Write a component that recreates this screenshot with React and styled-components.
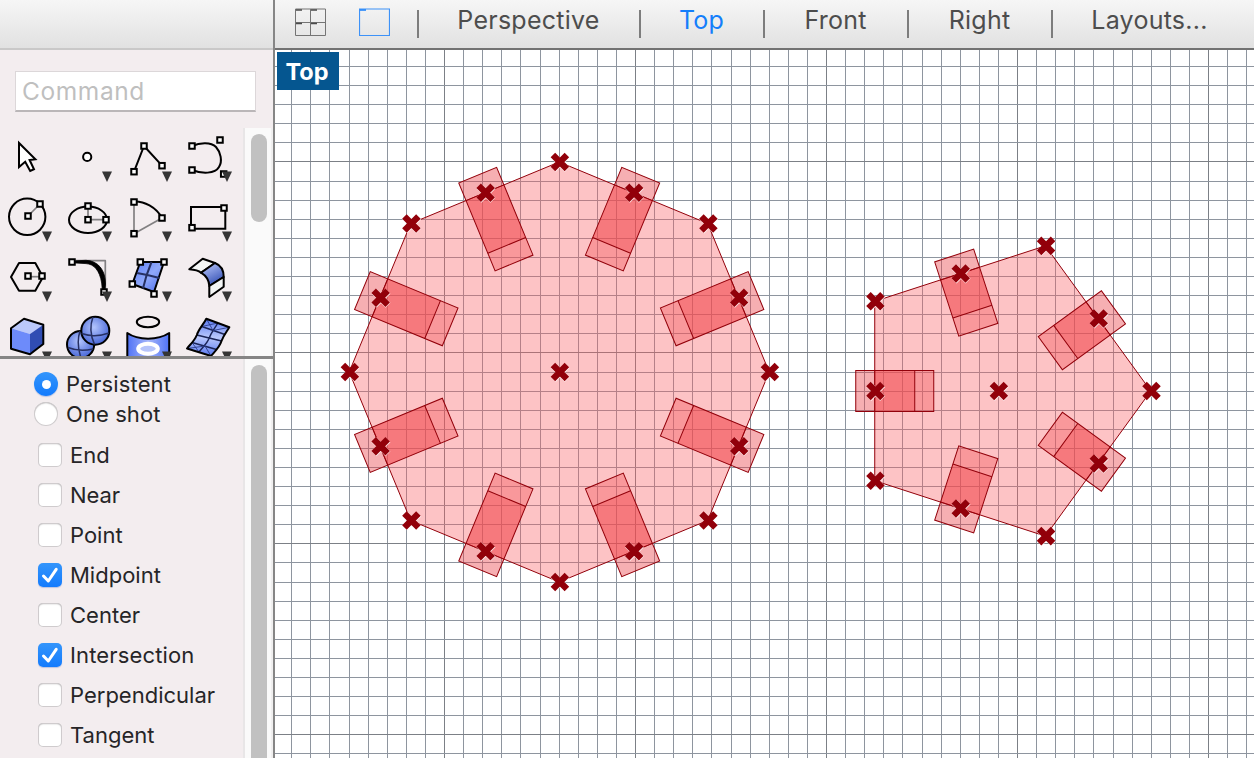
import React from "react";
import styled, { createGlobalStyle } from "styled-components";

const GlobalStyle = createGlobalStyle`
  * { box-sizing: border-box; }
  body { margin: 0; overflow: hidden; background: #fff; font-family: Inter, "Liberation Sans", sans-serif; }
`;

const Window = styled.div`
  display: flex;
  width: 1254px;
  height: 758px;
  overflow: hidden;
`;

const Sidebar = styled.aside`
  display: flex;
  flex-direction: column;
  flex: none;
  width: 275px;
  border-right: 2px solid #868686;
  background: #f3edef;
`;

const Header = styled.div`
  flex: none;
  height: 50px;
  border-bottom: 2px solid ${(p) => p.$line};
  background: linear-gradient(#f6f6f6, #e1e1e1);
`;

const CommandArea = styled.div`
  flex: none;
  height: 78px;
  padding: 21px 17px 0 15px;
`;

const CommandInput = styled.input`
  display: block;
  width: 241px;
  height: 41px;
  padding: 0 0 1px 6px;
  border: 1px solid #dcd7d9;
  border-bottom: 2px solid #bab6b8;
  border-radius: 0;
  outline: none;
  background: #fff;
  font: 400 24.5px Inter, sans-serif;
  letter-spacing: 0.6px;
  &::placeholder { color: #bfbfbf; opacity: 1; }
`;

const ScrollPane = styled.div`
  display: flex;
  overflow: hidden;
  height: ${(p) => p.$height}px;
  flex: none;
`;

const PaneBody = styled.div`
  flex: none;
  width: 243px;
`;

const ScrollTrack = styled.div`
  flex: none;
  width: 30px;
  padding: 6px 6px 0 6px;
  border-left: 2px solid #e8e6e7;
  border-right: 2px solid #f0efef;
  background: #fafafa;
`;

const ScrollThumb = styled.div`
  width: 16px;
  height: ${(p) => p.$height}px;
  border-radius: 8px;
  background: #c1c1c1;
`;

const ToolGrid = styled.div`
  display: grid;
  grid-template-columns: repeat(4, 60px);
  grid-auto-rows: 60px;
  padding-top: 2px;
`;

const ToolIcon = styled.svg`
  display: block;
  width: 60px;
  height: 60px;
  fill: none;
  stroke: #000;
  stroke-width: 2;
  stroke-linejoin: round;
`;

const Divider = styled.div`
  flex: none;
  height: 3px;
  background: #858585;
`;

const Options = styled.div`
  padding-top: 10px;
`;

const Option = styled.label`
  display: flex;
  align-items: center;
  height: ${(p) => (p.$radio ? 30 : 40)}px;
  padding-left: ${(p) => (p.$radio ? 34 : 38)}px;
  gap: 8px;
  margin-bottom: ${(p) => p.$after || 0}px;
  color: #262527;
  font-size: 22px;
  letter-spacing: ${(p) => p.$spacing || 0}px;
  white-space: nowrap;
`;

const Control = styled.span`
  display: flex;
  align-items: center;
  justify-content: center;
  width: 24px;
  height: 24px;
  border-radius: ${(p) => (p.$radio ? "50%" : "5px")};
  background: ${(p) => (p.$on ? "linear-gradient(#3395fb, #137bfd)" : "#fff")};
  box-shadow: ${(p) => (p.$on ? "0 1px 1px rgba(60,100,190,.3)" : "inset 0 0 0 1px #cfcbcd, inset 0 1px 1.5px #aaa")};
`;

const RadioDot = styled.span`
  width: 9px;
  height: 9px;
  border-radius: 50%;
  background: #fff;
`;

const Main = styled.main`
  display: flex;
  flex-direction: column;
  width: 979px;
`;

const TabBar = styled(Header)`
  display: flex;
  align-items: flex-start;
  padding-left: 20px;
`;

const LayoutIcon = styled.svg`
  flex: none;
  display: block;
  width: 31px;
  height: 28px;
  margin: 8px ${(p) => p.$gap}px 0 0;
  fill: none;
`;

const Tab = styled.button`
  flex: none;
  width: ${(p) => p.$width}px;
  height: 40px;
  padding: 0;
  border: 0;
  background: none;
  color: ${(p) => (p.$active ? "#147efb" : "#4d4d4d")};
  font: 400 25px/40px Inter, sans-serif;
  letter-spacing: 0.25px;
  text-indent: -1px;
`;

const Separator = styled.span`
  flex: none;
  width: 2px;
  height: 28px;
  margin-top: 10px;
  background: #7d7d7d;
`;

const Viewport = styled.section`
  position: relative;
  width: 979px;
  height: 708px;
`;

const Drawing = styled.svg`
  display: block;
  width: 979px;
  height: 708px;
`;

const ViewLabel = styled.div`
  position: absolute;
  left: 2px;
  top: 2px;
  width: 62px;
  height: 38px;
  padding-right: 2px;
  background: #055690;
  color: #fff;
  text-align: center;
  font: 700 23.5px/40px Inter, sans-serif;
`;

const Handle = ({ x, y }) => (
  <rect x={x - 2.75} y={y - 2.75} width="5.5" height="5.5" fill="#fff" strokeWidth="2" strokeLinejoin="miter" />
);
const Handles = ({ at }) => at.map(([x, y]) => <Handle key={`${x},${y}`} x={x} y={y} />);
const grey = { stroke: "#828082", strokeWidth: 1.7 };

const tools = [
  { id: "select", plain: true, art: <path d="M19 13V37L25.2 31.8L30.2 41L34 39.2L29.6 30L35.4 29.2Z" fill="#fff" strokeWidth="2" strokeLinejoin="miter" /> },
  { id: "point", art: <circle cx="27.2" cy="26.9" r="4.1" fill="#fff" /> },
  { id: "polyline", art: <><path d="M14 41.7L24 16L42 35.7" /><Handles at={[[14, 41.7], [24, 16], [42, 35.7]]} /></> },
  { id: "curve", art: <><path d="M12 16C20 12.5 31 12 36 17C40.5 22 42.8 31 39 37C35 44 22 44 12 40" /><Handles at={[[12, 16], [12, 40], [40, 10], [43.7, 44]]} /></> },
  { id: "circle", art: <><circle cx="27.2" cy="26.8" r="18.2" /><path d="M28 26L40 14" {...grey} /><Handles at={[[28, 26], [40, 14]]} /></> },
  { id: "ellipse", art: <><ellipse cx="28" cy="29.8" rx="19" ry="13.2" /><path d="M28 16V29.7H46" {...grey} /><Handles at={[[28, 16], [28, 29.7], [46, 29.7]]} /></> },
  { id: "arc", art: <><path d="M14 12V43.7L42 28" {...grey} /><path d="M14 11.5C24 11 36 17 42 28" /><Handles at={[[14, 12], [14, 43.7], [42, 28]]} /></> },
  { id: "rectangle", art: <><path d="M11 17H45.3V38.8H11Z" strokeLinejoin="miter" /><Handles at={[[44, 18], [12, 37.7]]} /></> },
  { id: "polygon", art: <><path d="M11 27L19 13H35.3L43 27L35.3 40.7H19Z" /><path d="M28 26.7H42" {...grey} /><Handles at={[[28, 26], [42, 26]]} /></> },
  { id: "fillet", art: <><path d="M16 10.7H45.3V42" {...grey} /><path d="M12 11L26 10.3C38 10.8 45.5 20 45.5 34L44.7 42H42.5L41.7 33C39.7 20.5 34 14 26 13.6L12 12.8Z" fill="#000" strokeWidth=".8" /><Handles at={[[12, 12], [44, 42]]} /></> },
  { id: "surface", art: <><path d="M20.3 12H44L34 42L12.3 34Z" fill="url(#blue)" /><path d="M31.5 12Q26 25 23 38.5M17 23Q29 25 39.5 28" stroke="#263063" /><Handles at={[[20.3, 12], [44, 12], [12.3, 34], [34, 44]]} /></> },
  { id: "blend", art: <><path d="M9.3 19.2L22.7 8.7L35 13L21 22.7C18 20 14 19.5 9.3 19.2Z" fill="#f4f6f6" /><path d="M21 22.7L35 13C41.5 15.5 43.7 21 43.7 27L29.3 36C29 30 26.5 26 21 22.7Z" fill="url(#sheen)" /><path d="M43.7 27V36.7L29.3 47V36Z" fill="#f4f6f6" /></> },
  { id: "box", art: <><path d="M11 18.3L24 8.7L43.3 14.7L30 24Z" fill="#bbc9fb" stroke="none" /><path d="M11 18.3L30 24V44.3L11 38.7Z" fill="#6d8bfa" stroke="none" /><path d="M30 24L43.3 14.7V34L30 44.3Z" fill="#304db3" stroke="none" /><path d="M11 18.3L24 8.7L43.3 14.7V34L30 44.3L11 38.7Z" /></> },
  { id: "boolean", art: <><circle cx="20.6" cy="34.5" r="13.6" fill="url(#ball)" /><path d="M8 37.5Q19 42 33 39M20 21Q16 33 21 48" stroke="#263063" strokeWidth="1.5" /><circle cx="35.3" cy="20.7" r="14" fill="url(#ball)" /><path d="M21.5 23.5Q35 28 49 23M33 7Q28 20 34.5 34.5" stroke="#263063" strokeWidth="1.5" /></> },
  { id: "extrude", art: <><ellipse cx="28" cy="12" rx="11.2" ry="5.3" /><path d="M7.3 23C18 30.5 38 30.5 49.2 23V60H7.3Z" fill="url(#tube)" /><ellipse cx="28" cy="38.8" rx="9.8" ry="5" fill="#b6c4fa" stroke="#fff" strokeWidth="4" /></> },
  { id: "mesh", art: <><path d="M26.3 8.7L49.3 17.3C46.5 22 43.5 25.5 41.5 31C39.5 37.5 35 41 31 46L7 38.5C10.5 34 14.5 31 16.8 25C19 18.5 23.5 14.5 26.3 8.7Z" fill="url(#mesh)" stroke="none" /><path d="M37.8 13C34.5 19 31.5 22 29.2 28C27 34 22.5 37 19 42M21.8 16.5L45 24.5M16.8 25L41.5 31M12 32.5L36.5 39.5" stroke="#1c2659" strokeWidth="1.5" /><path d="M21.8 16.5L37.8 13M33 20.5L49.3 17.3M26.3 8.7L33 20.5M12 32.5L19 42M7 38.5L25 36M25 36L31 46" stroke="#2b3c8c" strokeWidth=".9" /><path d="M26.3 8.7L49.3 17.3C46.5 22 43.5 25.5 41.5 31C39.5 37.5 35 41 31 46L7 38.5C10.5 34 14.5 31 16.8 25C19 18.5 23.5 14.5 26.3 8.7Z" /></> },
];

const Gradients = () => (
  <defs>
    <linearGradient id="blue" x1="0" y1="0" x2="1" y2="1"><stop offset="0" stopColor="#5b7df6" /><stop offset=".5" stopColor="#8fa8fa" /><stop offset="1" stopColor="#4668ec" /></linearGradient>
    <linearGradient id="sheen" x1="0.2" y1="0" x2=".7" y2="1"><stop offset="0" stopColor="#b7c6fc" /><stop offset="1" stopColor="#2e4bb0" /></linearGradient>
    <radialGradient id="ball" cx=".45" cy=".38" r=".6"><stop offset="0" stopColor="#b3c5fd" /><stop offset="1" stopColor="#4a69d8" /></radialGradient>
    <linearGradient id="tube"><stop offset="0" stopColor="#4f72f5" /><stop offset=".5" stopColor="#a5b6fa" /><stop offset="1" stopColor="#4f72f5" /></linearGradient>
    <linearGradient id="mesh" x1="0" y1="0" x2="0" y2="1"><stop offset="0" stopColor="#5878f0" /><stop offset=".5" stopColor="#b9c8fc" /><stop offset="1" stopColor="#5878f0" /></linearGradient>
  </defs>
);

const options = [
  { label: "Persistent", radio: true, on: true, spacing: 0.15 },
  { label: "One shot", radio: true, after: 6, spacing: 0.08 },
  { label: "End" },
  { label: "Near", spacing: -0.1 },
  { label: "Point" },
  { label: "Midpoint", on: true },
  { label: "Center" },
  { label: "Intersection", on: true, spacing: 0.15 },
  { label: "Perpendicular" },
  { label: "Tangent" },
];

const Check = () => (
  <svg width="24" height="24" viewBox="0 0 24 24" fill="none">
    <path d="M5.5 13L10.3 18L18.2 6.3" stroke="#fff" strokeWidth="3" strokeLinecap="round" strokeLinejoin="round" />
  </svg>
);

const tabs = [
  { label: "Perspective", width: 220 },
  { label: "Top", width: 122, active: true },
  { label: "Front", width: 142 },
  { label: "Right", width: 142 },
  { label: "Layouts...", width: 194 },
];

const polar = (cx, cy, r, deg) => {
  const a = (deg * Math.PI) / 180;
  return [cx + r * Math.cos(a), cy + r * Math.sin(a)];
};

const Marker = ({ x, y }) => (
  <g transform={`translate(${x + 0.3} ${y})`}>
    <path d="M-7 -7L7 7M-7 7L7 -7" stroke="#fff" strokeOpacity=".8" strokeWidth="7" transform="translate(.3 .5)" />
    <path d="M-7 -7L7 7M-7 7L7 -7" stroke="#92000a" strokeWidth="6.4" />
  </g>
);

const Figure = ({ cx, cy, radius, sides, depth }) => {
  const step = 360 / sides;
  const apothem = radius * Math.cos(Math.PI / sides);
  const corners = Array.from({ length: sides }, (_, i) => polar(cx, cy, radius, i * step));
  const middles = Array.from({ length: sides }, (_, i) => (i + 0.5) * step);
  return (
    <g>
      <g transform="translate(-.4 0)">
        <polygon points={corners.map((c) => c.join()).join(" ")} fill="rgba(250,92,98,.37)" stroke="#92000a" strokeWidth="1" />
        {middles.map((deg) => (
          <g key={deg} transform={`translate(${cx} ${cy}) rotate(${deg}) translate(${apothem} 0)`} stroke="#92000a" strokeWidth="1">
            <rect x="0" y="-20.5" width="19" height="41" fill="rgba(232,60,68,.41)" stroke="none" />
            <rect x={19 - depth} y="-20.5" width="19" height="41" fill="rgba(242,80,84,.37)" stroke="none" />
            <rect x={38 - depth} y="-20.5" width={depth - 38} height="41" fill="rgba(241,70,74,.59)" stroke="none" />
            <rect x={19 - depth} y="-20.5" width={depth} height="41" fill="none" />
            <path d={`M${38 - depth} -20.5V20.5M0 -20.5V20.5`} />
          </g>
        ))}
      </g>
      {corners.map(([x, y], i) => <Marker key={i} x={x} y={y} />)}
      {middles.map((deg) => {
        const [x, y] = polar(cx, cy, apothem, deg);
        return <Marker key={deg} x={x} y={y} />;
      })}
      <Marker x={cx} y={cy} />
    </g>
  );
};

const columns = Array.from({ length: 51 }, (_, i) => i + 2);
const rows = Array.from({ length: 37 }, (_, i) => i - 5);

const GridLines = () => (
  <g shapeRendering="crispEdges">
    {columns.map((k) => (
      <rect key={k} x={Math.round(253 + 19.1 * k)} y="50" width="1" height="708" fill={k % 10 === 0 ? "#7c8086" : "#8e959f"} />
    ))}
    {rows.map((k) => (
      <rect key={k} x="275" y={Math.ceil(161 + 19.095 * k)} width="979" height="1" fill={k % 10 === 0 ? "#7c8086" : "#8e959f"} />
    ))}
  </g>
);

export default function App() {
  return (
    <Window>
      <GlobalStyle />
      <Sidebar>
        <Header $line="#c9c8c8" />
        <CommandArea>
          <CommandInput placeholder="Command" />
        </CommandArea>
        <ScrollPane $height={228}>
          <PaneBody>
            <ToolGrid>
              {tools.map((tool, i) => (
                <ToolIcon key={tool.id} viewBox="0 0 60 60">
                  {i === 0 && <Gradients />}
                  {tool.art}
                  {!tool.plain && <path d="M42 41.4H52L47 52Z" fill="#353535" stroke="none" />}
                </ToolIcon>
              ))}
            </ToolGrid>
          </PaneBody>
          <ScrollTrack>
            <ScrollThumb $height={88} />
          </ScrollTrack>
        </ScrollPane>
        <Divider />
        <ScrollPane $height={399}>
          <PaneBody>
            <Options>
              {options.map((o) => (
                <Option key={o.label} $radio={o.radio} $after={o.after} $spacing={o.spacing}>
                  <Control $radio={o.radio} $on={o.on}>
                    {o.on && (o.radio ? <RadioDot /> : <Check />)}
                  </Control>
                  {o.label}
                </Option>
              ))}
            </Options>
          </PaneBody>
          <ScrollTrack>
            <ScrollThumb $height={420} />
          </ScrollTrack>
        </ScrollPane>
      </Sidebar>
      <Main>
        <TabBar $line="#727272">
          <LayoutIcon viewBox="0 0 31 28" $gap={33}>
            <path d="M.5 1H30.5V27.5H.5ZM15.5 1V27.5M.5 14.5H30.5" stroke="#747474" />
            <path d="M1 2H7M16 2H22M1 15.5H7M16 15.5H22" stroke="#4a4a4a" strokeWidth="1.5" />
          </LayoutIcon>
          <LayoutIcon viewBox="0 0 31 28" $gap={27}>
            <path d="M.5 1H30.5V27.5H.5Z" stroke="#3d92f8" strokeWidth="1.2" />
            <path d="M1 2H7" stroke="#147efb" strokeWidth="1.5" />
          </LayoutIcon>
          {tabs.map((t) => (
            <React.Fragment key={t.label}>
              <Separator />
              <Tab $width={t.width} $active={t.active}>{t.label}</Tab>
            </React.Fragment>
          ))}
        </TabBar>
        <Viewport>
          <Drawing viewBox="275 50 979 708" fill="none">
            <GridLines />
            <Figure cx={559.6} cy={372} radius={210} sides={8} depth={95} />
            <Figure cx={998.6} cy={391} radius={152.6} sides={5} depth={78} />
          </Drawing>
          <ViewLabel>Top</ViewLabel>
        </Viewport>
      </Main>
    </Window>
  );
}
